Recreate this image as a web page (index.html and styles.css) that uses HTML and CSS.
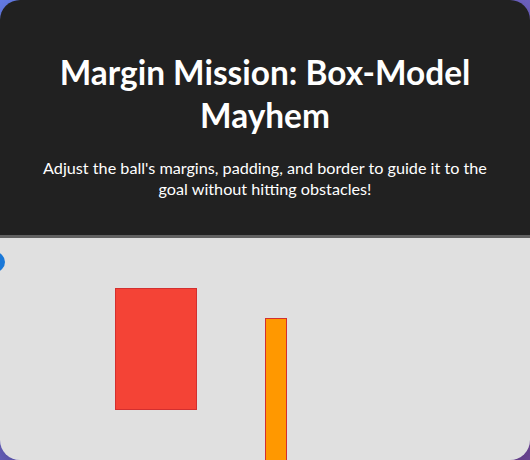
FILE: index.html
```html
<!DOCTYPE html>
<html lang="en">
<head>
<meta charset="utf-8">
<title>Margin Mission: Box-Model Mayhem</title>
<link rel="stylesheet" href="styles.css">
</head>
<body>
<div class="container">
  <header class="header">
    <h1 class="title">Margin Mission: Box-Model Mayhem</h1>
    <p class="subtitle">Adjust the ball's margins, padding, and border to guide it to the goal without hitting obstacles!</p>
  </header>
  <main class="game-area">
    <div class="ball"></div>
    <div class="obstacle obstacle-block"></div>
    <div class="obstacle obstacle-bar"></div>
  </main>
</div>
</body>
</html>
```
FILE: styles.css
```css
html, body {
  margin: 0;
  padding: 0;
}
body {
  width: 530px;
  height: 460px;
  overflow: hidden;
  background: linear-gradient(135deg, #667eea 0%, #764ba2 100%);
  font-family: Lato, "Noto Sans", sans-serif;
}
.container {
  width: 530px;
  height: 460px;
  border-radius: 20px;
  overflow: hidden;
  display: flex;
  flex-direction: column;
  box-shadow: 0 10px 30px rgba(0, 0, 0, 0.3);
}
.header {
  background: #212121;
  color: #ffffff;
  text-align: center;
  padding: 51px 30px 0;
  height: 184px;
  border-bottom: 3px solid #616161;
  flex: none;
}
.title {
  margin: 0;
  font-size: 33.4px;
  line-height: 43px;
  font-weight: 700;
}
.subtitle {
  margin: 20px 0 0;
  font-size: 16.2px;
  line-height: 21px;
}
.game-area {
  flex: 1;
  background: #e0e0e0;
  position: relative;
}
.ball {
  position: absolute;
  left: -15px;
  top: 14px;
  width: 20px;
  height: 20px;
  border-radius: 50%;
  background: #1a78d8;
}
.obstacle {
  position: absolute;
  box-sizing: border-box;
  border: 1px solid #d32f2f;
}
.obstacle-block {
  left: 115px;
  top: 50px;
  width: 82px;
  height: 122px;
  background: #f44336;
}
.obstacle-bar {
  left: 265px;
  top: 80px;
  width: 22px;
  height: 200px;
  background: #ff9800;
}
```
